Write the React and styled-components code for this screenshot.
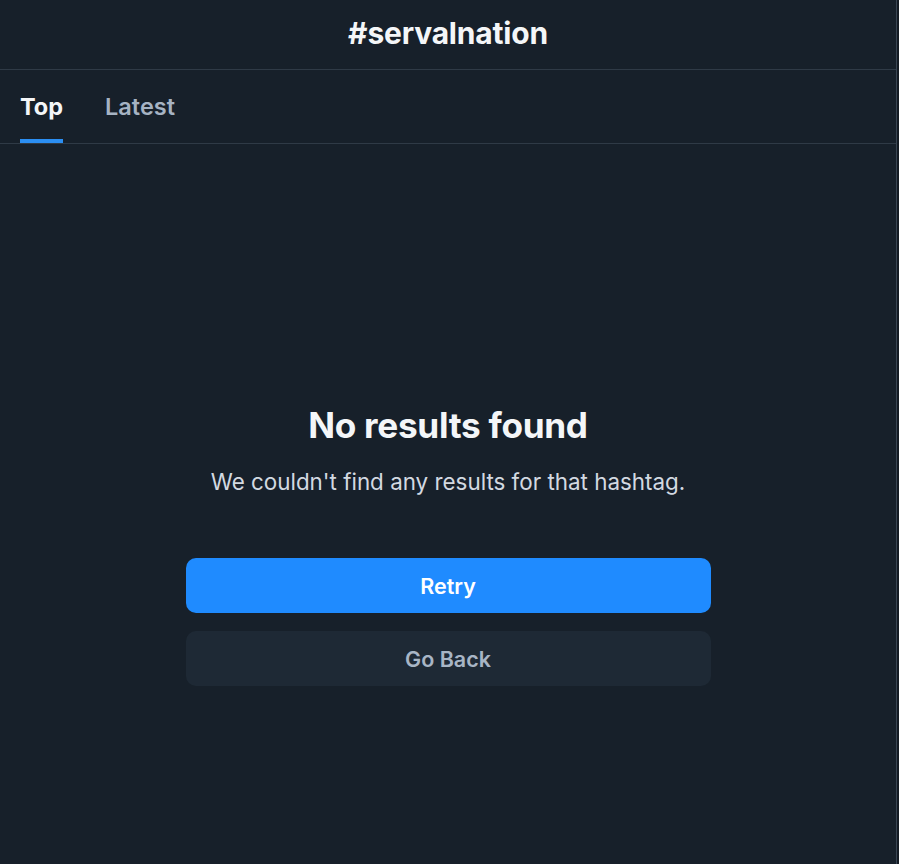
import React, { useState } from "react"
import styled, { createGlobalStyle } from "styled-components"

const GlobalStyle = createGlobalStyle`
  html, body {
    margin: 0;
    padding: 0;
    background: #141b23;
  }
  body {
    font-family: Inter, "Noto Sans", sans-serif;
    -webkit-font-smoothing: antialiased;
  }
`

const Page = styled.div`
  width: 896px;
  height: 864px;
  display: flex;
  flex-direction: column;
  background: #17202a;
  border-right: 1px solid #3a4654;
`

const Header = styled.header`
  height: 66px;
  padding-bottom: 3px;
  display: flex;
  align-items: center;
  justify-content: center;
  border-bottom: 1px solid #2f3a46;
`

const Title = styled.h1`
  margin: 0;
  color: #f4f6f8;
  font-size: 30px;
  font-weight: 700;
  letter-spacing: -0.2px;
`

const Tabs = styled.nav`
  height: 73px;
  display: flex;
  align-items: stretch;
  gap: 42px;
  padding: 0 20px;
  border-bottom: 1px solid #2f3a46;
`

const Tab = styled.button`
  position: relative;
  display: flex;
  align-items: center;
  padding: 0 0 1px;
  border: none;
  background: none;
  cursor: pointer;
  font-family: inherit;
  font-size: 23.5px;
  font-weight: ${(p) => (p.$active ? 700 : 600)};
  color: ${(p) => (p.$active ? "#f4f6f8" : "#a6b3c3")};

  &::after {
    content: "";
    position: absolute;
    left: 0;
    right: 0;
    bottom: 0;
    height: 4px;
    background: ${(p) => (p.$active ? "#2b8ef2" : "transparent")};
  }
`

const Content = styled.main`
  flex: 1;
  display: flex;
  flex-direction: column;
  align-items: center;
  padding-top: 259px;
`

const Heading = styled.h2`
  margin: 0;
  color: #f4f6f8;
  font-size: 35.2px;
  font-weight: 700;
  line-height: 44px;
  letter-spacing: -0.3px;
`

const Subtitle = styled.p`
  margin: 20px 0 0;
  color: #d3d9e1;
  font-size: 22.4px;
  line-height: 30px;
`

const Actions = styled.div`
  margin-top: 61px;
  width: 525px;
  display: flex;
  flex-direction: column;
  gap: 18px;
`

const Button = styled.button`
  height: 55px;
  border: none;
  border-radius: 10px;
  font-family: inherit;
  font-size: 21.5px;
  font-weight: 600;
  cursor: pointer;
  background: ${(p) => (p.$primary ? "#1f8bff" : "#1e2935")};
  color: ${(p) => (p.$primary ? "#ffffff" : "#a8b5c5")};
`

export default function App() {
  const [tab, setTab] = useState("top")
  return (
    <>
      <GlobalStyle />
      <Page>
        <Header>
          <Title>#servalnation</Title>
        </Header>
        <Tabs>
          <Tab $active={tab === "top"} onClick={() => setTab("top")}>
            Top
          </Tab>
          <Tab $active={tab === "latest"} onClick={() => setTab("latest")}>
            Latest
          </Tab>
        </Tabs>
        <Content>
          <Heading>No results found</Heading>
          <Subtitle>We couldn't find any results for that hashtag.</Subtitle>
          <Actions>
            <Button $primary>Retry</Button>
            <Button>Go Back</Button>
          </Actions>
        </Content>
      </Page>
    </>
  )
}
